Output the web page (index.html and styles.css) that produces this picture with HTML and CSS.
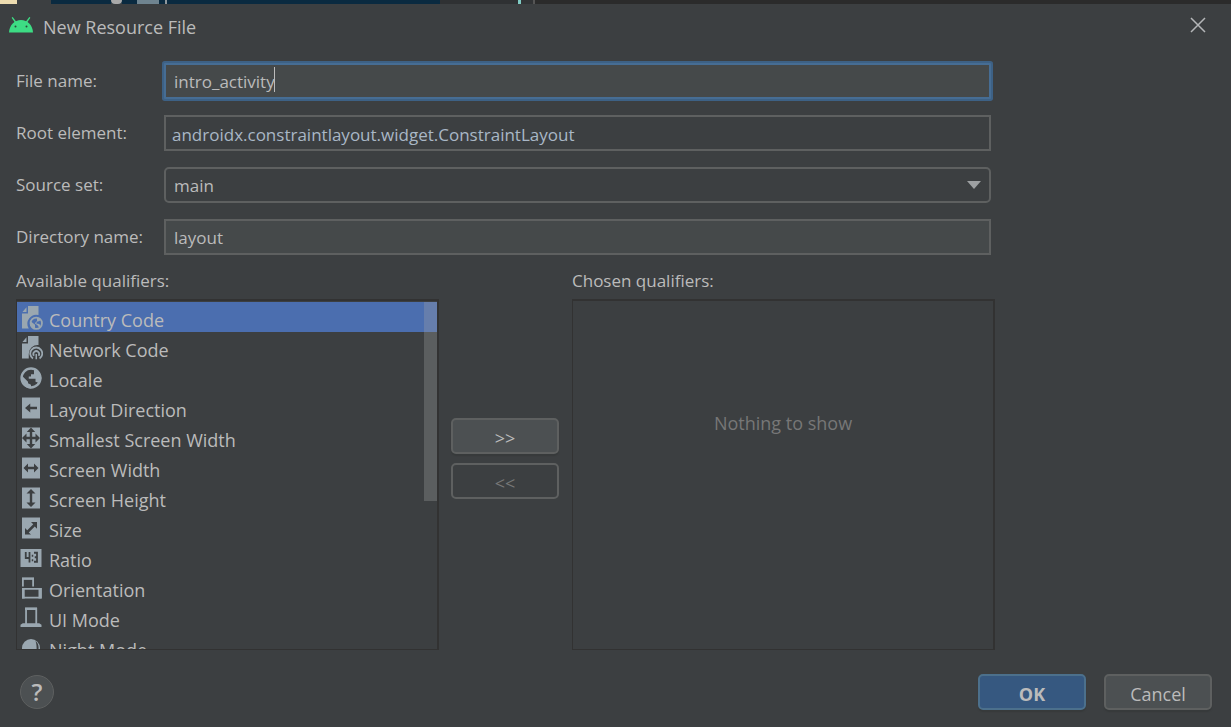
FILE: index.html
```
<!DOCTYPE html>
<html lang="en">
<head>
    <meta charset="UTF-8">
    <meta name="viewport" content="width=device-width, initial-scale=1.0">
    <title>New Resource File</title>
    <link rel="stylesheet" href="styles.css">
</head>
<body>
    <div class="backdrop">
        <span class="strip cream"></span>
        <span class="strip grey"></span>
        <span class="strip navy"></span>
        <span class="strip blob"></span>
        <span class="strip navy short"></span>
        <span class="strip steel"></span>
        <span class="strip navy gap"></span>
        <span class="strip bar"></span>
        <span class="strip navy wide"></span>
        <span class="strip grey tab"></span>
        <span class="strip teal"></span>
        <span class="strip grey small"></span>
        <span class="strip bar dim"></span>
        <span class="strip dark"></span>
    </div>

    <form class="dialog">
        <header class="titlebar">
            <svg class="logo" viewBox="0 0 24 16" aria-hidden="true">
                <path d="M3.5 .8 6.5 5M20.500 .8 17.500 5" stroke="#3ddc84" stroke-width="1.4" stroke-linecap="round"/>
                <path d="M0 15.500C.4 8 5.500 3 12 3s11.600 5 12 12.500z" fill="#3ddc84"/>
                <circle cx="6.500" cy="9.500" r="1" fill="#2b4a3a"/>
                <circle cx="17.500" cy="9.500" r="1" fill="#2b4a3a"/>
            </svg>
            <h1>New Resource File</h1>
            <button type="button" class="close" aria-label="Close">
                <svg viewBox="0 0 16 16"><path d="M1 1 15 15M15 1 1 15" stroke="#b4b6b8" stroke-width="1.5"/></svg>
            </button>
        </header>

        <main class="content">
            <div class="fields">
                <label for="fileName">File name:</label>
                <div class="field">
                    <input type="text" id="fileName" class="focused" value="intro_activity">
                    <span class="caret"></span>
                </div>

                <label for="rootElement">Root element:</label>
                <div class="field">
                    <input type="text" id="rootElement" class="editor" value="androidx.constraintlayout.widget.ConstraintLayout">
                </div>

                <label for="sourceSet">Source set:</label>
                <div class="field">
                    <select id="sourceSet">
                        <option>main</option>
                    </select>
                    <svg class="arrow" viewBox="0 0 14 8" aria-hidden="true"><path d="M0 0h14L7 8z" fill="#9da0a2"/></svg>
                </div>

                <label for="dirName">Directory name:</label>
                <div class="field">
                    <input type="text" id="dirName" value="layout">
                </div>
            </div>

            <div class="qualifiers">
                <section class="column">
                    <h2 id="availableLabel">Available qualifiers:</h2>
                    <div class="panel">
                        <ul class="list" role="listbox" aria-labelledby="availableLabel">
                            <li class="selected" role="option" aria-selected="true">
                                <svg viewBox="0 0 16 16">
                                    <path class="fill" d="M2 5h4V0h7v6A6 6 0 0 0 6.500 15H2zM2.300 4 5 .8V4z"/>
                                    <circle class="line" cx="11.500" cy="11.500" r="3.800"/>
                                    <path class="fill" d="M7.500 10l3.200 2.500v3C8.500 15 7 13 7.500 10zM12 7.500l2.500 1.300-.8 1.200-1.700.5-.5 1.200 2 .3 1 1.500-.8 1.500-1.200-2-2-1.500 1.500-1.500z"/>
                                </svg>
                                Country Code
                            </li>
                            <li role="option">
                                <svg viewBox="0 0 16 16">
                                    <path class="fill" d="M2 5h4V0h7v6A6 6 0 0 0 6.500 12v3H2zM2.300 4 5 .8V4z"/>
                                    <path class="line" d="M9.300 15A4 4 0 1 1 13.700 15M10 13.200A1.900 1.900 0 1 1 13 13.200"/>
                                    <path class="fill" d="M11 12h1v3.500h-1z"/>
                                </svg>
                                Network Code
                            </li>
                            <li role="option">
                                <svg viewBox="0 0 16 16">
                                    <circle class="line thick" cx="8" cy="8" r="6.300"/>
                                    <path class="fill" d="M1.500 6 6 10.500V11.500L8 12.500V15C3 14.500 1 11 1.500 6zM10 1.500 13 3.500 15 8l-1.500 4-1-1-1.500-.5V8.500H6.500V7H8V5.500h2z"/>
                                </svg>
                                Locale
                            </li>
                            <li role="option">
                                <svg viewBox="0 0 16 16">
                                    <path class="fill" d="M2 1h12v14H2z"/>
                                    <path class="cut" d="M4 8l3.500-3v2.200H12v1.600H7.500V11z"/>
                                </svg>
                                Layout Direction
                            </li>
                            <li role="option">
                                <svg viewBox="0 0 16 16">
                                    <path class="fill" d="M2 1h12v14H2z"/>
                                    <path class="cut" d="M8 1l2.800 3H8.800v3.200H11V5l3 3-3 3V8.800H8.800V12h2L8 15l-2.800-3h2V8.800H5V11L2 8l3-3v2.200h2.200V4h-2z"/>
                                </svg>
                                Smallest Screen Width
                            </li>
                            <li role="option">
                                <svg viewBox="0 0 16 16">
                                    <path class="fill" d="M2 1h12v14H2z"/>
                                    <path class="cut" d="M3 8l3-3v2.200h4V5l3 3-3 3V8.800H6V11z"/>
                                </svg>
                                Screen Width
                            </li>
                            <li role="option">
                                <svg viewBox="0 0 16 16">
                                    <path class="fill" d="M2 1h12v14H2z"/>
                                    <path class="cut" d="M8 2l3 3H8.800v6H11l-3 3-3-3h2.200V5H5z"/>
                                </svg>
                                Screen Height
                            </li>
                            <li role="option">
                                <svg viewBox="0 0 16 16">
                                    <path class="fill" d="M2 1h12v14H2z"/>
                                    <path class="cut" d="M12 4v4.500L10.500 7l-4 4L8 12.300H4V8l1.500 1.500 4-4L8 4z"/>
                                </svg>
                                Size
                            </li>
                            <li role="option">
                                <svg viewBox="0 0 16 16">
                                    <path class="fill" d="M1 2h14v12H1z"/>
                                    <path class="cut-line" d="M4.500 4v4H7M7 4v7M8.500 6.500h1M8.500 9.500h1M10 4.500h2v6h-2M10.500 7.500H12"/>
                                </svg>
                                Ratio
                            </li>
                            <li role="option">
                                <svg viewBox="0 0 16 16">
                                    <path class="line" d="M2.600 7V1.800h6.800V7M2.600 8.600h12v5.800h-12z"/>
                                    <path class="fill" d="M2 8h1.800v7H2zM13 8h2v7h-2zM2 1h8v1.500H2z"/>
                                </svg>
                                Orientation
                            </li>
                            <li role="option">
                                <svg viewBox="0 0 16 16">
                                    <path class="line" d="M4.700 12V1.800h6.800V12"/>
                                    <path class="fill" d="M4 1h8v1.600H4zM2.500 11.500h11L15 12.500V14H1v-1.500z"/>
                                </svg>
                                UI Mode
                            </li>
                            <li role="option">
                                <svg viewBox="0 0 16 16">
                                    <circle class="fill" cx="8" cy="8" r="6"/>
                                    <path class="cut" d="M11 3.300C13.500 5 13.800 9 11.500 12.300 11.800 9 12 6 11 3.300z"/>
                                </svg>
                                Night Mode
                            </li>
                        </ul>
                        <span class="thumb"></span>
                    </div>
                </section>

                <div class="movers">
                    <button type="button">&gt;&gt;</button>
                    <button type="button" disabled>&lt;&lt;</button>
                </div>

                <section class="column">
                    <h2>Chosen qualifiers:</h2>
                    <div class="panel empty">
                        <p>Nothing to show</p>
                    </div>
                </section>
            </div>
        </main>

        <footer class="footer">
            <button type="button" class="help" aria-label="Help">?</button>
            <button type="submit" class="primary">OK</button>
            <button type="button">Cancel</button>
        </footer>
    </form>
</body>
</html>
```

FILE: styles.css
```
* {
    box-sizing: border-box;
}
body {
    margin: 0;
    height: 100vh;
    display: flex;
    flex-direction: column;
    overflow: hidden;
    background: #3c3f41;
    color: #bbbbbb;
    font-family: "Open Sans", "Noto Sans", sans-serif;
    font-size: 18px;
    line-height: 24px;
}

/* slice of the editor behind the dialog */
.backdrop {
    display: flex;
    height: 4px;
    flex-shrink: 0;
}
.cream {
    width: 17px;
    background: #eddcb0;
}
.grey {
    width: 34px;
    background: #3c3f41;
}
.navy {
    width: 60px;
    background: #0a2a40;
}
.blob {
    width: 11px;
    border-radius: 0 0 5px 5px;
    background: #a8a8a8;
    box-shadow: 0 -2px 0 2px #0a2a40;
}
.short {
    width: 15px;
}
.steel {
    width: 22px;
    background: #6f8490;
}
.gap {
    width: 6px;
}
.bar {
    width: 2px;
    background: #8f979c;
}
.wide {
    width: 273px;
}
.tab {
    width: 78px;
    background: #2f3133;
}
.teal {
    width: 3px;
    background: #80cbc4;
}
.small {
    width: 12px;
    background: #313335;
}
.dim {
    background: #555555;
}
.dark {
    flex: 1;
    background: #2b2b2b;
}

.dialog {
    flex: 1;
    min-height: 0;
    display: flex;
    flex-direction: column;
}
.titlebar {
    display: flex;
    align-items: center;
    height: 46px;
    padding: 0 24px 0 9px;
}
.logo {
    width: 24px;
    height: 16px;
    margin-bottom: 4px;
    fill: none;
}
h1 {
    margin: 0 auto 0 10px;
    font-size: 18px;
    font-weight: normal;
}
h2 {
    margin: 0;
    font-size: 17px;
    font-weight: normal;
}

/* buttons */
button {
    width: 108px;
    height: 36px;
    padding: 4px 0 0;
    border: 2px solid #5e6060;
    border-radius: 5px;
    background: #4c5052;
    box-shadow: 0 2px 1px #373a3b;
    color: #bbbbbb;
    font: inherit;
    line-height: 24px;
}
button:disabled {
    background: none;
    box-shadow: none;
    color: #777777;
}
.close {
    display: flex;
    width: 18px;
    height: 18px;
    margin-bottom: 4px;
    padding: 1px;
    border: none;
    background: none;
    box-shadow: none;
}
.close svg {
    width: 16px;
    height: 16px;
}
.primary {
    border-color: #4c708c;
    background: #365880;
    font-weight: bold;
}
.help {
    width: 34px;
    height: 34px;
    margin-right: auto;
    padding: 0;
    border-width: 1px;
    border-radius: 50%;
    box-shadow: none;
    font-size: 24px;
    font-weight: 600;
}

/* form rows */
.content {
    flex: 1;
    min-height: 0;
    display: flex;
    flex-direction: column;
    padding: 13px 236px 0 16px;
}
.fields {
    display: grid;
    grid-template-columns: 148px 1fr;
    gap: 16px 0;
    align-items: center;
    padding-right: 4px;
    font-size: 17px;
}
.field {
    position: relative;
    display: flex;
}
input,
select {
    width: 100%;
    height: 36px;
    padding: 0 8px;
    border: 2px solid #5e6060;
    border-radius: 0;
    outline: none;
    background: #45494a;
    color: #bbbbbb;
    font: inherit;
}
.focused {
    border-color: #466d94;
    border-radius: 1px;
    box-shadow: 0 0 0 2px #3d6185;
}
.editor {
    padding: 2px 6px 0;
    background: none;
    color: #a9b7c6;
}
select {
    appearance: none;
    padding-top: 2px;
    border-radius: 5px;
    background: #3c3f41;
}
.caret {
    position: absolute;
    left: 110px;
    top: 4px;
    width: 1px;
    height: 25px;
    background: #bbbbbb;
}
.arrow {
    position: absolute;
    right: 10px;
    top: 14px;
    width: 14px;
    height: 8px;
    pointer-events: none;
}

/* qualifier lists */
.qualifiers {
    flex: 1;
    min-height: 0;
    display: flex;
    gap: 12px;
    padding-top: 14px;
}
.column {
    flex: 1;
    min-width: 0;
    display: flex;
    flex-direction: column;
    gap: 6px;
}
.panel {
    position: relative;
    flex: 1;
    min-height: 0;
    overflow: hidden;
    border: 1px solid #323232;
    border-top-width: 2px;
    border-right-width: 2px;
}
.list {
    margin: 0;
    padding: 1px 0 0;
    list-style: none;
}
.list li {
    display: flex;
    gap: 6px;
    height: 30px;
    padding: 4px 2px 0;
    line-height: 28px;
}
.list .selected {
    background: #4b6eaf;
}
.list svg {
    width: 24px;
    height: 24px;
    flex-shrink: 0;
    fill: none;
}
.list .fill {
    fill: #9aa7b0;
}
.list .line {
    stroke: #9aa7b0;
    stroke-width: 1.2;
}
.list .thick {
    stroke-width: 1.6;
}
.list .cut {
    fill: #3c3f41;
}
.list .cut-line {
    stroke: #3c3f41;
    stroke-width: 1.2;
}
.thumb {
    position: absolute;
    top: 1px;
    right: 0;
    width: 13px;
    height: 199px;
    background: rgba(166, 166, 166, 0.3);
}
.movers {
    display: flex;
    flex-direction: column;
    justify-content: center;
    gap: 9px;
    margin: 0 1px 3px 0;
}
.empty {
    display: flex;
    justify-content: center;
    padding-top: 110px;
}
.empty p {
    margin: 0;
    color: #777777;
}

.footer {
    display: flex;
    align-items: center;
    gap: 18px;
    padding: 24px 19px 17px 20px;
}
```
